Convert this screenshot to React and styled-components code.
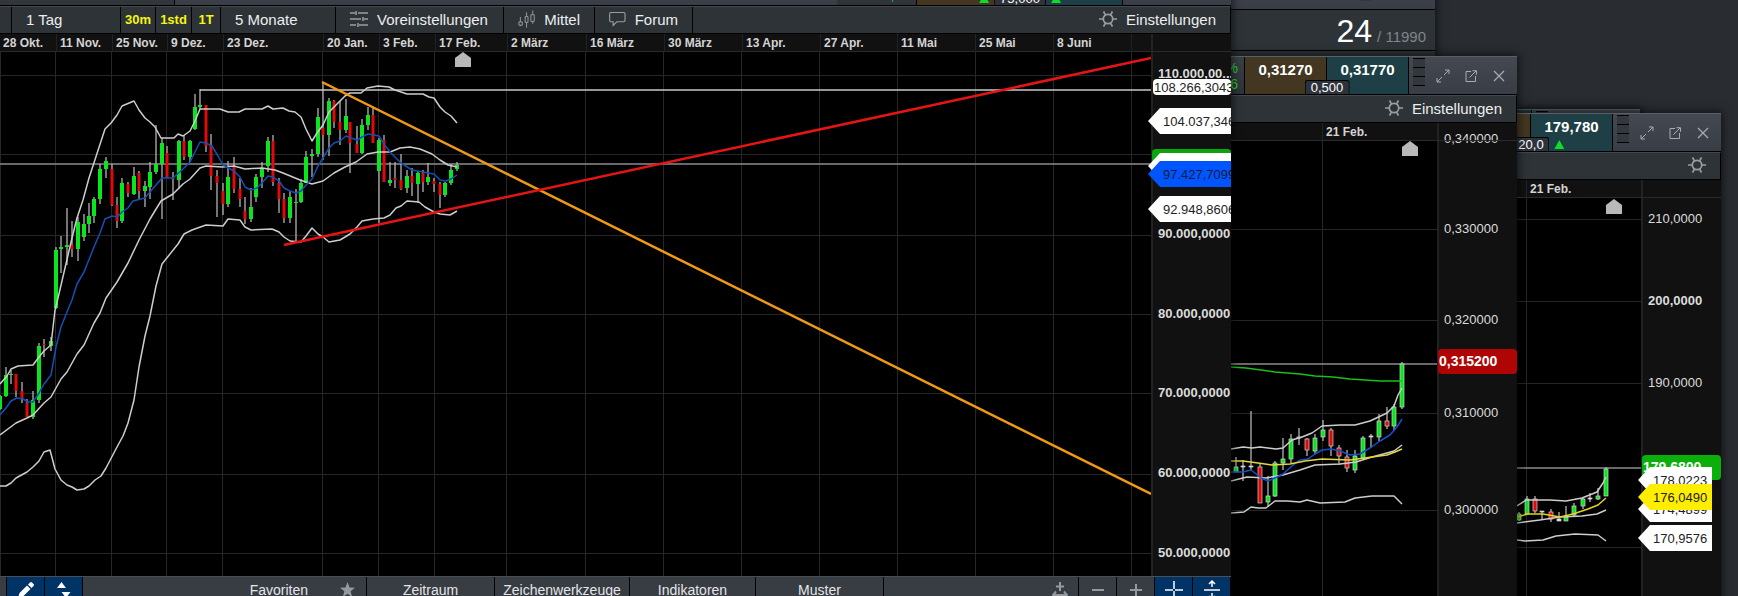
import React from 'react'
import styled, { createGlobalStyle } from 'styled-components'

const GlobalStyle = createGlobalStyle`
  * {
    box-sizing: border-box;
  }
  body {
    margin: 0;
    background: #292c31;
    font-family: 'Liberation Sans', Arial, sans-serif;
  }
  button {
    font-family: inherit;
    margin: 0;
    padding: 0;
    border: none;
    background: none;
    color: inherit;
    cursor: pointer;
  }
`

const Desktop = styled.main`
  position: relative;
  height: 100vh;
  overflow: hidden;
  background: #292c31;
`
const Window = styled.section`
  position: absolute;
  top: ${props => props.$top}px;
  right: ${props => props.$right}px;
  bottom: ${props => props.$bottom || '-8px'};
  left: calc(100% - ${props => props.$left});
  display: flex;
  flex-direction: column;
  background: #000;
  box-shadow: 0 0 8px 2px rgba(0, 0, 0, 0.55);
`
const Clip = styled.div`
  flex: 1;
  min-height: 0;
  display: flex;
  flex-direction: column;
  overflow: hidden;
`
const TitleBar = styled.header`
  position: relative;
  flex: none;
  display: flex;
  justify-content: flex-end;
  height: 39px;
  overflow: hidden;
  border-top: 1px solid #5b6067;
  border-bottom: 1px solid #000;
  background: linear-gradient(#434851, #393d46);
`
const TitleName = styled.div`
  flex: none;
  width: ${props => props.$width}px;
  border-right: 1px solid #000;
  background: #31363b;
`
const TitleSpace = styled.div`
  flex: 1;
`
const Change = styled.div`
  flex: none;
  width: ${props => props.$width}px;
  padding: 3px 6px 0 0;
  text-align: right;
  font-size: 14px;
  line-height: 16px;
  color: #32c832;
  background: linear-gradient(#3a3f46, #2e3338);
`
const Quotes = styled.div`
  position: relative;
  flex: none;
  display: flex;
  border-left: 1px solid #000;
`
const Quote = styled.button`
  width: ${props => props.$width}px;
  padding-bottom: 12px;
  border-right: 1px solid #000;
  font-size: 15px;
  font-weight: bold;
  color: #fff;
  background: ${props => (props.$buy ? '#1d3f45' : '#443721')};
`
const Spread = styled.div`
  position: absolute;
  left: 50%;
  bottom: 0;
  display: flex;
  align-items: center;
  gap: 5px;
  transform: translateX(-50%);
`
const SpreadValue = styled.span`
  padding: 0 5px;
  border: 1px solid #000;
  border-bottom: none;
  border-radius: 3px 3px 0 0;
  font-size: 13px;
  line-height: 13px;
  color: #fff;
  background: #2e333b;
`
const UpArrow = styled.i`
  border: 5px solid transparent;
  border-top: none;
  border-bottom: 9px solid #0fdc28;
  visibility: ${props => (props.$hidden ? 'hidden' : 'visible')};
`
const Grip = styled.div`
  flex: none;
  width: 12px;
  margin: 1px 4px 8px;
  background: repeating-linear-gradient(#000 0 1px, #33373e 1px 9px);
`
const WindowButtons = styled.div`
  flex: none;
  display: flex;
  padding-right: 4px;
`
const IconButton = styled.button`
  display: flex;
  align-items: center;
  justify-content: center;
  width: 28px;
  color: #a9adb2;
`

const Toolbar = styled.nav`
  flex: none;
  display: flex;
  height: 28px;
  border-top: 1px solid #43484d;
  border-right: 1px solid #000;
  border-bottom: 1px solid #000;
  background: #2e3337;
`
const Handle = styled.div`
  width: 12px;
  border-right: 1px solid #000;
`
const Tool = styled.button`
  display: flex;
  align-items: center;
  gap: 9px;
  width: ${props => (props.$width ? props.$width + 'px' : 'auto')};
  padding: 0 14px 2px;
  border-right: ${props => (props.$last ? 'none' : '1px solid #000')};
  margin-left: ${props => (props.$last ? 'auto' : '0')};
  font-size: 15px;
  white-space: nowrap;
  color: #eceef0;
  svg {
    color: #9a9ea2;
  }
`
const Period = styled.button`
  width: ${props => props.$width}px;
  padding-bottom: 2px;
  border-right: 1px solid #000;
  font-size: 13px;
  font-weight: bold;
  color: #f6f60a;
`

const ChartArea = styled.div`
  flex: 1;
  min-height: 0;
  display: grid;
  grid-template-columns: minmax(0, 1fr) 80px;
  grid-template-rows: 18px minmax(0, 1fr);
  background: #111;
`
const Dates = styled.div`
  grid-area: 1 / 1 / 2 / 3;
  z-index: 1;
  display: grid;
  grid-template-columns: ${props => props.$columns};
  padding-right: 80px;
  border-bottom: 1px solid #2a2a2a;
`
const DateCell = styled.span`
  padding-left: 3px;
  font-size: 12px;
  font-weight: bold;
  line-height: 18px;
  white-space: nowrap;
  color: #d4d4d4;
  & + & {
    border-left: 1px solid #222;
  }
`
const Plot = styled.svg`
  grid-area: 2 / 1;
  display: block;
  width: 100%;
  height: 100%;
  background: #000;
`
const Axis = styled.div`
  grid-area: 1 / 2 / 3 / 3;
  position: relative;
  min-height: 0;
  padding: ${props => props.$offset}px 0 0 5px;
  border-left: 2px solid #222;
`
const Tick = styled.div`
  height: ${props => props.$height}px;
  font-size: 13px;
  font-weight: ${props => (props.$bold ? 'bold' : 'normal')};
  line-height: 16px;
  white-space: nowrap;
  color: #dcdcdc;
`
const PriceBox = styled.div`
  position: absolute;
  top: ${props => props.$top}px;
  left: ${props => (props.$small ? 0 : -1)}px;
  right: 0;
  height: ${props => (props.$small ? 16 : 25)}px;
  padding-left: 1px;
  border-radius: 4px;
  overflow: hidden;
  font-size: ${props => (props.$small ? 13 : 14)}px;
  font-weight: ${props => (props.$small ? 'normal' : 'bold')};
  line-height: ${props => (props.$small ? 17 : 25)}px;
  color: ${props => (props.$small ? '#222' : '#fff')};
  background: ${props => props.$color};
`
const PriceArrow = styled.div`
  position: absolute;
  top: ${props => props.$top}px;
  left: -5px;
  right: ${props => props.$inset || 0}px;
  height: 26px;
  padding-left: 15px;
  overflow: hidden;
  font-size: 13px;
  line-height: 27px;
  color: ${props => props.$ink || '#222'};
  background: ${props => props.$color || '#fff'};
  clip-path: polygon(0 50%, 12px 0, 100% 0, 100% 100%, 12px 100%);
`

const BottomBar = styled.footer`
  flex: none;
  display: flex;
  height: 28px;
  border-top: 1px solid #4a4f55;
  background: #383c43;
`
const Tab = styled.button`
  display: flex;
  align-items: center;
  justify-content: ${props => (props.$end ? 'flex-end' : 'center')};
  gap: 32px;
  width: ${props => props.$width}px;
  padding: 0 ${props => (props.$end ? 11 : 0)}px 2px;
  border-right: 1px solid #000;
  font-size: 14px;
  color: #e4e6e8;
`
const BarSpace = styled.div`
  width: ${props => props.$width}px;
  border-right: 1px solid #000;
`
const BarButton = styled.button`
  display: flex;
  align-items: center;
  justify-content: ${props => (props.$grow ? 'flex-end' : 'center')};
  flex: ${props => (props.$grow ? '1' : 'none')};
  width: 38px;
  padding: 0 ${props => (props.$grow ? 10 : 0)}px 2px;
  border-right: 1px solid #000;
  color: ${props => (props.$active ? '#fff' : '#96999d')};
  background: ${props => (props.$active ? '#003366' : 'transparent')};
`

const Counter = styled.div`
  flex: none;
  display: flex;
  align-items: baseline;
  justify-content: flex-end;
  gap: 5px;
  height: 42px;
  padding: 0 9px 0 0;
  border-top: 1px solid #000;
  border-bottom: 1px solid #000;
  font-size: 15px;
  color: #80858c;
  background: #2e3337;
`
const Count = styled.strong`
  font-size: 32px;
  font-weight: normal;
  line-height: 42px;
  color: #fff;
`
const SlimBar = styled.div`
  flex: none;
  display: flex;
  justify-content: flex-end;
  height: 42px;
  padding-right: 59px;
  background: linear-gradient(#434851, #393d46);
`
const Rest = styled.div`
  flex: 1;
  background: #2e3337;
`

// icons
const GearIcon = () => (
  <svg width="18" height="18" viewBox="0 0 18 18" fill="none" stroke="currentColor" strokeWidth="1.7">
    <circle cx="9" cy="9" r="4.7" />
    <path d="M0 9h4M14 9h4M4.5 1.5l2 3.4M13.5 1.5l-2 3.4M4.5 16.5l2-3.4M13.5 16.5l-2-3.4" />
  </svg>
)
const SlidersIcon = () => (
  <svg width="18" height="18" viewBox="0 0 18 18" fill="none" stroke="currentColor" strokeWidth="1.5">
    <path d="M0 3h5M8 3h10M6 1v4M0 9h11M14 9h4M13 7v4M0 15h6M9 15h9M8 13v4" />
  </svg>
)
const CandlesIcon = () => (
  <svg width="18" height="18" viewBox="0 0 18 18" fill="none" stroke="currentColor">
    <path d="M2.5 7v5M2.5 15.5v1M1 12h3.5v3.5H1zM9 2v4M9 13v5M7.5 6.500h3v6h-3zM15.5 0v4M15.5 12v2M13.5 4.500h3.500v7h-3.500z" />
  </svg>
)
const SpeechIcon = () => (
  <svg width="18" height="16" viewBox="0 0 18 16" fill="none" stroke="currentColor" strokeWidth="1.2">
    <path d="M2 1h14q1.300 0 1.300 1.300v7.400q0 1.300-1.300 1.300H8.500L4.500 15v-4H2Q.7 11 .7 9.700V2.300Q.7 1 2 1z" />
  </svg>
)
const MaximizeIcon = () => (
  <svg width="14" height="14" viewBox="0 0 14 14" fill="none" stroke="currentColor">
    <path d="M8 6l5-5M9 1h4v4M6 8l-5 5M1 9v4h4" />
  </svg>
)
const PopoutIcon = () => (
  <svg width="12" height="12" viewBox="0 0 12 12" fill="none" stroke="currentColor">
    <path d="M6 1.500H1v10h9.500V6M4.500 7.500L11 1M7.500.7h4v4" />
  </svg>
)
const CloseIcon = () => (
  <svg width="12" height="12" viewBox="0 0 12 12" fill="none" stroke="currentColor" strokeWidth="1.2">
    <path d="M1 1l10 10M11 1L1 11" />
  </svg>
)
const StarIcon = () => (
  <svg width="15" height="15" viewBox="0 0 24 24" fill="#96999d">
    <path d="M12 0l3.200 8.800L24 9.200l-7 5.600L19.500 24 12 18.700 4.500 24 7 14.800 0 9.200l8.800-.4z" />
  </svg>
)
const PencilIcon = () => (
  <svg width="18" height="18" viewBox="0 0 18 18" fill="currentColor">
    <path d="M1 17l1.500-5L10 4.500 13.500 8 6 15.500zM11 3.500l2-2q1-1 2 0l1.500 1.500q1 1 0 2l-2 2z" />
  </svg>
)
const SplitIcon = () => (
  <svg width="14" height="18" viewBox="0 0 14 18" fill="currentColor">
    <path d="M0 7l4.500-6L9 7zM4.500 11h9L9 17z" />
  </svg>
)
const FitIcon = () => (
  <svg width="16" height="18" viewBox="0 0 16 18" fill="none" stroke="currentColor" strokeWidth="2">
    <path d="M8 1v9M4 5.500h8M1 14h14M4 10.500L1 14l3 3.500M12 10.500l3 3.500-3 3.500" />
  </svg>
)
const MinusIcon = () => (
  <svg width="14" height="14" viewBox="0 0 14 14" stroke="currentColor" strokeWidth="2">
    <path d="M1 7h12" />
  </svg>
)
const PlusIcon = () => (
  <svg width="14" height="14" viewBox="0 0 14 14" stroke="currentColor" strokeWidth="2">
    <path d="M1 7h12M7 1v12" />
  </svg>
)
const CrossIcon = () => (
  <svg width="18" height="18" viewBox="0 0 18 18" stroke="currentColor" strokeWidth="1.5">
    <path d="M0 9h8M10 9h8M9 0v8M9 10v8" />
  </svg>
)
const StretchIcon = () => (
  <svg width="18" height="20" viewBox="0 0 18 20" fill="none" stroke="currentColor" strokeWidth="1.5">
    <path d="M1 10h16M9 1v6M6 4l3-3 3 3M9 19v-6M6 16l3 3 3-3" />
  </svg>
)

// candle: x, high, low, body top, body bottom, kind (0 falling, 1 rising, 2 flat)
const btcCandles = [
  [0, 395, 410, 396, 409, 1], [6, 367, 397, 375, 396, 1], [11, 370, 384, 374, 375, 1], [16, 374, 397, 374, 391, 0],
  [22, 382, 403, 391, 398, 0], [27, 399, 417, 403, 417, 0], [33, 391, 419, 400, 417, 1], [39, 343, 403, 346, 400, 1],
  [44, 339, 357, 344, 345, 0], [51, 337, 351, 341, 346, 1], [56, 247, 309, 250, 308, 1], [61, 236, 273, 247, 249, 1],
  [67, 208, 265, 245, 247, 1], [72, 221, 257, 245, 249, 0], [78, 217, 261, 222, 249, 1], [84, 214, 241, 224, 237, 1],
  [89, 203, 233, 216, 224, 1], [94, 197, 223, 199, 216, 1], [100, 164, 204, 169, 199, 1], [106, 157, 178, 161, 169, 1],
  [112, 164, 206, 169, 205, 0], [117, 197, 228, 205, 221, 0], [122, 178, 223, 183, 221, 1], [128, 182, 197, 184, 193, 0],
  [134, 167, 195, 176, 194, 1], [139, 171, 199, 173, 191, 0], [145, 181, 207, 186, 191, 1], [150, 162, 199, 172, 187, 1],
  [156, 125, 174, 164, 172, 1], [162, 138, 219, 143, 164, 1], [167, 146, 178, 153, 178, 0], [173, 172, 200, 178, 179, 0],
  [179, 140, 189, 141, 180, 1], [184, 135, 160, 141, 157, 0], [190, 140, 162, 141, 157, 1], [195, 94, 130, 107, 129, 1],
  [200, 89, 110, 105, 107, 1], [206, 105, 152, 105, 146, 0], [211, 134, 190, 145, 176, 0], [217, 170, 217, 176, 183, 0],
  [223, 183, 215, 191, 204, 0], [228, 161, 207, 177, 204, 1], [234, 157, 193, 166, 189, 0], [240, 178, 207, 189, 199, 0],
  [245, 197, 224, 211, 219, 0], [251, 188, 222, 207, 219, 1], [256, 174, 202, 177, 197, 1], [262, 162, 188, 169, 177, 1],
  [268, 137, 172, 141, 166, 1], [273, 135, 186, 141, 182, 0], [279, 178, 213, 183, 199, 0], [284, 193, 223, 199, 218, 0],
  [290, 191, 223, 197, 218, 1], [296, 189, 242, 202, 203, 1], [301, 179, 203, 183, 202, 1], [306, 151, 183, 157, 183, 1],
  [312, 149, 177, 154, 156, 1], [318, 108, 157, 117, 154, 1], [323, 82, 160, 128, 135, 0], [329, 98, 156, 101, 135, 1],
  [334, 100, 128, 101, 122, 0], [340, 101, 145, 122, 130, 0], [346, 99, 133, 116, 130, 1], [350, 122, 173, 122, 143, 0],
  [357, 126, 153, 144, 153, 0], [362, 119, 154, 125, 153, 1], [368, 107, 130, 115, 125, 1], [373, 108, 143, 115, 143, 0],
  [379, 138, 223, 140, 171, 1], [384, 135, 182, 140, 182, 0], [390, 162, 186, 180, 183, 1], [395, 162, 188, 178, 180, 0],
  [401, 154, 190, 180, 189, 0], [407, 170, 193, 176, 188, 1], [412, 168, 196, 176, 183, 0], [418, 171, 203, 173, 184, 1],
  [423, 170, 192, 173, 182, 0], [428, 163, 185, 177, 182, 1], [434, 178, 192, 181, 184, 0], [440, 182, 208, 184, 195, 0],
  [445, 182, 197, 183, 195, 1], [451, 164, 185, 170, 183, 1], [457, 162, 171, 165, 169, 1],
]
const btcBands = [
  '0,384 7,376 11,369 18,366 33,365 39,357 44,351 51,345 55,310 58,298 72,238 77,218 83,200 89,178 105,129 111,123 117,115 122,106 134,101 139,110 145,118 150,122 155,127 161,138 174,138 178,134 183,136 190,131 195,121 200,109 220,109 228,112 239,112 245,109 262,109 268,106 273,109 283,108 289,111 295,112 301,117 306,129 312,141 317,133 323,125 329,112 340,101 345,96 350,93 361,93 367,88 378,86 389,87 395,90 401,92 407,94 423,94 429,97 434,98 440,107 445,112 451,116 457,123',
  '0,435 16,423 27,418 33,415 44,403 51,397 61,379 67,372 77,354 84,345 94,323 100,313 106,298 117,282 128,263 139,240 150,219 161,201 173,194 183,184 190,179 200,168 206,166 222,167 234,166 245,169 262,168 275,170 283,173 300,180 312,184 323,181 334,173 345,167 356,162 367,154 378,152 390,152 400,148 410,147 420,149 432,154 440,160 448,165 457,167',
  '0,486 6,486 11,483 16,478 27,472 33,467 39,461 44,452 50,450 55,469 61,480 67,485 72,487 77,490 84,489 89,486 95,480 101,476 106,468 117,447 123,436 128,423 134,400 139,367 145,336 150,316 156,286 162,264 178,244 184,234 192,230 206,225 223,226 228,219 240,220 245,227 251,230 272,229 279,232 284,237 290,241 301,242 306,236 312,228 318,234 323,237 329,242 340,240 350,234 357,227 362,221 373,219 384,218 390,215 396,208 401,206 407,201 419,202 425,207 434,212 440,214 450,215 457,211',
]
const btcAverage =
  '0,415 6,408 11,401 17,398 23,399 28,402 33,402 39,393 44,384 51,375 56,347 61,327 67,312 72,300 77,284 84,272 94,247 100,233 105,219 112,216 117,217 122,212 128,208 133,201 145,198 150,192 162,178 173,178 183,169 190,162 200,142 206,143 212,146 218,156 223,165 234,171 240,177 245,187 251,190 257,188 262,183 268,176 273,177 279,181 284,188 290,191 296,193 301,191 306,185 312,179 318,166 323,158 329,148 334,143 340,141 346,136 351,138 357,140 362,137 368,134 374,135 379,136 384,144 390,152 401,163 412,170 423,172 434,174 440,180 446,181 451,179 457,175'

const adaCandles = [
  [1236, 457, 472, 467, 472, 1], [1243, 460, 481, 466, 467, 2], [1251, 411, 471, 466, 467, 2], [1260, 464, 503, 467, 503, 0],
  [1268, 476, 507, 496, 502, 1], [1275, 461, 497, 463, 496, 1], [1283, 438, 470, 459, 463, 1], [1291, 434, 463, 439, 459, 1],
  [1299, 428, 445, 437, 438, 2], [1307, 438, 456, 439, 450, 0], [1315, 434, 454, 438, 451, 1], [1323, 420, 441, 430, 437, 1],
  [1331, 428, 456, 430, 446, 0], [1339, 445, 465, 448, 456, 0], [1347, 450, 472, 457, 468, 0], [1355, 450, 473, 456, 470, 1],
  [1363, 436, 459, 438, 458, 1], [1371, 434, 448, 436, 437, 2], [1379, 414, 441, 421, 437, 1], [1387, 407, 429, 421, 426, 0],
  [1394, 404, 431, 407, 426, 1], [1402, 362, 409, 364, 407, 1],
]
const adaBands = [
  '1231,449 1243,447 1252,448 1260,447 1276,449 1283,448 1292,440 1302,437 1312,433 1322,426 1340,425 1355,425 1370,421 1387,413 1394,406 1398,395 1402,388',
  '1231,481 1247,477 1266,478 1283,475 1300,470 1315,465 1340,464 1356,462 1372,457 1387,453 1394,451 1402,445',
  '1231,513 1244,512 1251,507 1258,508 1266,508 1275,501 1287,501 1300,502 1307,500 1320,503 1345,502 1355,498 1372,496 1394,496 1402,504',
]
const adaAverages = [
  ['#18c018', '1231,367 1246,368 1275,372 1300,374 1315,376 1333,377 1350,379 1380,381 1402,381'],
  ['#1450c8', '1231,472 1243,472 1251,470 1255,473 1261,478 1268,481 1277,477 1283,474 1292,466 1300,460 1308,459 1315,454 1322,450 1331,449 1340,451 1350,455 1360,454 1370,448 1380,441 1390,435 1397,427 1402,419'],
  ['#e0d83c', '1231,461 1243,461 1258,463 1272,465 1290,464 1305,461 1322,459 1350,460 1372,457 1387,455 1395,452 1402,449'],
]

const solCandles = [
  [1519, 512, 521, 514, 520, 1], [1527, 496, 515, 499, 514, 1], [1535, 496, 513, 499, 511, 0], [1542, 511, 520, 511, 512, 2],
  [1551, 509, 522, 512, 519, 0], [1559, 512, 521, 519, 521, 2], [1566, 506, 521, 517, 521, 1], [1574, 503, 517, 506, 515, 1],
  [1583, 497, 509, 499, 506, 1], [1590, 493, 502, 498, 499, 2], [1598, 488, 500, 496, 499, 1], [1606, 467, 496, 469, 496, 1],
]
const solBands = [
  '1517,506 1526,500 1550,500 1566,501 1582,498 1597,492 1603,483 1606,477',
  '1517,523 1540,520 1560,517 1582,516 1597,514 1606,510',
  '1517,540 1525,541 1543,540 1556,536 1575,534 1598,535 1606,541',
]
const solAverages = [['#e6d21e', '1517,517 1528,514 1543,514 1560,517 1573,514 1588,509 1598,505 1606,498']]

const Grid = ({ box, xs, ys }) => (
  <g stroke="#262626">
    {xs.map(x => <path key={x} d={`M${x + 0.5} ${box[1]}v${box[3]}`} />)}
    {ys.map(y => <path key={y} d={`M${box[0]} ${y + 0.5}h${box[2]}`} />)}
  </g>
)

const fills = ['#e00a0a', '#0ae61e', '#e6e6e6']
const Candles = ({ data, outlined }) =>
  data.map(([x, high, low, top, bottom, kind]) => (
    <g key={x}>
      <path d={`M${x} ${high}V${low}`} stroke="#b4b4b4" strokeWidth="1.3" />
      <rect
        x={x - (kind === 0 && !outlined ? 1.5 : 2)}
        y={top}
        width={kind === 0 && !outlined ? 3 : 4}
        height={bottom - top}
        fill={fills[kind]}
        stroke={outlined ? '#d2d2d2' : 'none'}
        strokeWidth="0.7"
      />
    </g>
  ))

const Curve = ({ points, color = '#cdcdcd' }) => (
  <polyline points={points} fill="none" stroke={color} strokeWidth="1.5" strokeLinejoin="round" />
)

const HomeMark = ({ x, y }) => <path d={`M${x - 8} ${y + 15}v-9l8-6 8 6v9z`} fill="#b9b9b9" />

const Controls = () => (
  <>
    <Grip />
    <WindowButtons>
      <IconButton aria-label="Maximieren"><MaximizeIcon /></IconButton>
      <IconButton aria-label="Abdocken"><PopoutIcon /></IconButton>
      <IconButton aria-label="Schließen"><CloseIcon /></IconButton>
    </WindowButtons>
  </>
)

const btcDates = [
  '28 Okt.', '11 Nov.', '25 Nov.', '9 Dez.', '23 Dez.', '20 Jan.', '3 Feb.', '17 Feb.', '2 März',
  '16 März', '30 März', '13 Apr.', '27 Apr.', '11 Mai', '25 Mai', '8 Juni', '',
]

const BtcWindow = () => (
  <Window $top={-33} $right={507} $left="100%">
    <Clip>
      <TitleBar>
        <TitleName $width={175} />
        <TitleSpace />
        <Change $width={79}>%<br />1,96</Change>
        <Quotes>
          <Quote $width={103}>96.050</Quote>
          <Quote $buy $width={103}>96.125</Quote>
          <Spread><UpArrow /><SpreadValue>75,000</SpreadValue><UpArrow /></Spread>
        </Quotes>
        <Controls />
      </TitleBar>
      <Toolbar>
        <Handle />
        <Tool $width={109}>1 Tag</Tool>
        <Period $width={35}>30m</Period>
        <Period $width={36}>1std</Period>
        <Period $width={29}>1T</Period>
        <Tool $width={115}>5 Monate</Tool>
        <Tool $width={168}><SlidersIcon />Voreinstellungen</Tool>
        <Tool $width={91}><CandlesIcon />Mittel</Tool>
        <Tool $width={98}><SpeechIcon />Forum</Tool>
        <Tool $last><GearIcon />Einstellungen</Tool>
      </Toolbar>
      <ChartArea>
        <Dates $columns="56fr 56fr 55fr 56fr 100fr 56fr 56fr 72fr 79fr 78fr 78fr 78fr 77fr 78fr 78fr 78fr 20fr">
          {btcDates.map(date => <DateCell key={date}>{date}</DateCell>)}
        </Dates>
        <Plot viewBox="0 52 1151 524" preserveAspectRatio="none">
          <Grid
            box={[0, 52, 1151, 524]}
            xs={[0, 55, 111, 166, 222, 322, 378, 434, 506, 585, 663, 741, 819, 897, 975, 1053, 1131]}
            ys={[75, 154, 235, 314, 393, 474, 553]}
          />
          <path d="M0 164h1151" stroke="#8c8c8c" strokeWidth="1.5" />
          <Candles data={btcCandles} />
          {btcBands.map(points => <Curve key={points} points={points} />)}
          <Curve points={btcAverage} color="#1450b4" />
          <path d="M200 90H1151" stroke="#c8c8c8" strokeWidth="1.5" />
          <path d="M322 82L1151 494" stroke="#f09a14" strokeWidth="2.5" />
          <path d="M284 245L1151 58" stroke="#e61414" strokeWidth="2.5" />
          <HomeMark x={463} y={52} />
        </Plot>
        <Axis $offset={32}>
          <Tick $bold $height={80}>110.000,00...</Tick>
          <Tick $bold $height={80}>100.000,0000</Tick>
          <Tick $bold $height={80}>90.000,0000</Tick>
          <Tick $bold $height={79}>80.000,0000</Tick>
          <Tick $bold $height={80}>70.000,0000</Tick>
          <Tick $bold $height={80}>60.000,0000</Tick>
          <Tick $bold $height={40}>50.000,0000</Tick>
          <PriceBox $small $top={45} $color="#fff">108.266,3043</PriceBox>
          <PriceArrow $top={74}>104.037,3460</PriceArrow>
          <PriceBox $top={115} $color="#0aa50a" />
          <PriceArrow $top={119} />
          <PriceArrow $top={127} $color="#0055ff" $ink="#101c3c">97.427,7099</PriceArrow>
          <PriceArrow $top={162}>92.948,8606</PriceArrow>
        </Axis>
      </ChartArea>
      <BottomBar>
        <BarSpace $width={7} />
        <BarButton $active aria-label="Zeichnen"><PencilIcon /></BarButton>
        <BarButton $active aria-label="Anordnen"><SplitIcon /></BarButton>
        <Tab $end $width={284}>Favoriten<StarIcon /></Tab>
        <Tab $width={128}>Zeitraum</Tab>
        <Tab $width={135}>Zeichenwerkzeuge</Tab>
        <Tab $width={126}>Indikatoren</Tab>
        <Tab $width={128}>Muster</Tab>
        <BarButton $grow aria-label="Einpassen"><FitIcon /></BarButton>
        <BarButton aria-label="Verkleinern"><MinusIcon /></BarButton>
        <BarButton aria-label="Vergrößern"><PlusIcon /></BarButton>
        <BarButton $active aria-label="Fadenkreuz"><CrossIcon /></BarButton>
        <BarButton $active aria-label="Skalieren"><StretchIcon /></BarButton>
      </BottomBar>
    </Clip>
  </Window>
)

const CounterWindow = () => (
  <Window $top={-33} $right={303} $left="507px" $bottom="auto">
    <SlimBar><Grip /></SlimBar>
    <Counter><Count>24</Count>/ 11990</Counter>
    <Rest><br /></Rest>
  </Window>
)

const AdaWindow = () => (
  <Window $top={56} $right={221} $left="507px">
    <Clip>
      <TitleBar>
        <Change $width={79}>%<br />6</Change>
        <Quotes>
          <Quote $width={82}>0,31270</Quote>
          <Quote $buy $width={82}>0,31770</Quote>
          <Spread><SpreadValue>0,500</SpreadValue></Spread>
        </Quotes>
        <Controls />
      </TitleBar>
      <Toolbar><Tool $last><GearIcon />Einstellungen</Tool></Toolbar>
      <ChartArea>
        <Dates $columns="91fr 115fr">
          <DateCell />
          <DateCell>21 Feb.</DateCell>
        </Dates>
        <Plot viewBox="1231 141 206 463" preserveAspectRatio="none">
          <Grid box={[1231, 141, 206, 463]} xs={[1322]} ys={[229, 320, 413, 510]} />
          <path d="M1231 364h206" stroke="#8c8c8c" strokeWidth="1.5" />
          <Candles outlined data={adaCandles} />
          {adaBands.map(points => <Curve key={points} points={points} />)}
          {adaAverages.map(([color, points]) => <Curve key={color} points={points} color={color} />)}
          <HomeMark x={1410} y={141} />
        </Plot>
        <Axis $offset={8}>
          <Tick $height={90}>0,340000</Tick>
          <Tick $height={91}>0,330000</Tick>
          <Tick $height={93}>0,320000</Tick>
          <Tick $height={97}>0,310000</Tick>
          <Tick $height={90}>0,300000</Tick>
          <PriceBox $top={226} $color="#af0505">0,315200</PriceBox>
        </Axis>
      </ChartArea>
    </Clip>
  </Window>
)

const BackWindow = () => (
  <Window $top={109} $right={98} $left="221px">
    <Clip>
      <TitleBar>
        <Quotes><Quote $buy $width={82} /></Quotes>
        <Controls />
      </TitleBar>
    </Clip>
  </Window>
)

const SolWindow = () => (
  <Window $top={113} $right={17} $left="221px">
    <Clip>
      <TitleBar>
        <Quotes>
          <Quote $width={82}>179,580</Quote>
          <Quote $buy $width={82}>179,780</Quote>
          <Spread><UpArrow $hidden /><SpreadValue>20,0</SpreadValue><UpArrow /></Spread>
        </Quotes>
        <Controls />
      </TitleBar>
      <Toolbar><Tool $last aria-label="Einstellungen"><GearIcon /></Tool></Toolbar>
      <ChartArea>
        <Dates $columns="9fr 115fr">
          <DateCell />
          <DateCell>21 Feb.</DateCell>
        </Dates>
        <Plot viewBox="1517 198 124 406" preserveAspectRatio="none">
          <Grid box={[1517, 198, 124, 406]} xs={[1526]} ys={[219, 301, 383, 547]} />
          <path d="M1517 468h124" stroke="#8c8c8c" strokeWidth="1.5" />
          <Candles outlined data={solCandles} />
          {solBands.map(points => <Curve key={points} points={points} />)}
          {solAverages.map(([color, points]) => <Curve key={color} points={points} color={color} />)}
          <HomeMark x={1614} y={199} />
        </Plot>
        <Axis $offset={31}>
          <Tick $height={82}>210,0000</Tick>
          <Tick $bold $height={82}>200,0000</Tick>
          <Tick $height={84}>190,0000</Tick>
          <Tick $height={78}>180,0000</Tick>
          <Tick $height={50}>170,0000</Tick>
          <PriceBox $top={275} $color="#0aaf0a">179,6800</PriceBox>
          <PriceArrow $inset={9} $top={287}>178,0223</PriceArrow>
          <PriceArrow $inset={9} $top={316}>174,4899</PriceArrow>
          <PriceArrow $inset={9} $top={304} $color="#ffee00">176,0490</PriceArrow>
          <PriceArrow $inset={9} $top={345}>170,9576</PriceArrow>
        </Axis>
      </ChartArea>
    </Clip>
  </Window>
)

const App = () => {
  return (
    <>
      <GlobalStyle />
      <Desktop>
        <CounterWindow />
        <BackWindow />
        <SolWindow />
        <AdaWindow />
        <BtcWindow />
      </Desktop>
    </>
  )
}

export default App
